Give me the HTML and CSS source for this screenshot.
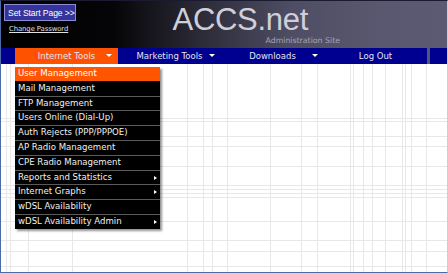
FILE: index.html
```html
<!DOCTYPE html>
<html>
<head>
<meta charset="utf-8">
<link rel="stylesheet" href="styles.css">
</head>
<body>
<div class="frame">
  <header class="header">
    <div class="tools">
      <button class="start-btn">Set Start Page &gt;&gt;</button>
      <a class="change-pw" href="#">Change Password</a>
    </div>
    <div class="brand">
      <div class="logo">ACCS.net</div>
      <div class="subtitle">Administration Site</div>
    </div>
  </header>
  <nav class="nav">
    <div class="nav-item active"><span>Internet Tools</span><i class="down"></i></div>
    <div class="nav-item"><span>Marketing Tools</span><i class="down"></i></div>
    <div class="nav-item"><span>Downloads</span><i class="down"></i></div>
    <div class="nav-item last"><span>Log Out</span></div>
  </nav>
  <main class="content">
    <ul class="menu">
      <li class="sel">User Management</li>
      <li>Mail Management</li>
      <li>FTP Management</li>
      <li>Users Online (Dial-Up)</li>
      <li>Auth Rejects (PPP/PPPOE)</li>
      <li>AP Radio Management</li>
      <li>CPE Radio Management</li>
      <li class="sub">Reports and Statistics</li>
      <li class="sub">Internet Graphs</li>
      <li>wDSL Availability</li>
      <li class="sub">wDSL Availability Admin</li>
    </ul>
  </main>
</div>
</body>
</html>
```
FILE: styles.css
```css
html, body { margin: 0; padding: 0; }
body { width: 448px; height: 273px; overflow: hidden; background: #fff; font-family: "DejaVu Sans", Verdana, sans-serif; }
.frame {
  width: 448px; height: 273px; box-sizing: border-box;
  border: 1px solid #4a6aa8; border-top-color: #1a1a30; border-right-color: #c8d0dc;
  display: flex; flex-direction: column; overflow: hidden;
}
.header {
  height: 47px; flex: none; display: flex; justify-content: space-between;
  background: linear-gradient(to right, #000 0, #050507 25%, #2c2b38 45%, #4f4d63 65%, #5a5870 85%, #5c5a72 100%);
}
.tools { padding: 3px 0 0 3px; display: flex; flex-direction: column; align-items: flex-start; }
.start-btn {
  font-family: "Liberation Sans", Arial, sans-serif; font-size: 8.6px; color: #fff; white-space: nowrap;
  background: #34349a; border: 1px solid #8c8cd6; padding: 0 0 0 3px; height: 17px; width: 72px;
  text-align: left; letter-spacing: -0.1px; margin: 0; box-sizing: border-box;
}
.change-pw { margin: 4px 0 0 5px; font-size: 6.9px; color: #e0e0e0; text-decoration: underline; letter-spacing: -0.1px; white-space: nowrap; }
.brand { display: flex; flex-direction: column; align-items: flex-end; margin-right: 107px; padding-top: 2px; }
.logo { font-family: "Liberation Sans", Arial, sans-serif; font-size: 31px; line-height: 34px; color: #cfcfd9; margin-right: 32px; letter-spacing: -0.3px; }
.subtitle { font-size: 7.8px; color: #a6a5b8; line-height: 9px; margin-top: -1px; }
.nav { height: 16px; flex: none; background: #000090; display: flex; padding-left: 14px; box-shadow: 0 1px 1px #9a9aa8; position: relative; }
.nav-item { width: 103px; height: 16px; position: relative; display: flex; align-items: center; justify-content: center; font-size: 8.5px; color: #e4e4f4; }
.nav-item.active { background: #ff5200; }
.nav-item.last { border-right: 3px solid #55557a; }
.nav-item .down { position: absolute; right: 6px; top: 6px; width: 0; height: 0; border-left: 3px solid transparent; border-right: 3px solid transparent; border-top: 3px solid #fff; }
.content {
  flex: 1; position: relative;
  background:
    linear-gradient(#e8e8e8,#e8e8e8) 0 54px / 100% 1px no-repeat,
    linear-gradient(#e8e8e8,#e8e8e8) 0 57px / 100% 1px no-repeat,
    linear-gradient(#e8e8e8,#e8e8e8) 0 72px / 100% 1px no-repeat,
    linear-gradient(#e8e8e8,#e8e8e8) 0 82px / 100% 1px no-repeat,
    linear-gradient(#e8e8e8,#e8e8e8) 0 102px / 100% 1px no-repeat,
    linear-gradient(#e8e8e8,#e8e8e8) 0 121px / 100% 1px no-repeat,
    linear-gradient(#e8e8e8,#e8e8e8) 0 125px / 100% 1px no-repeat,
    linear-gradient(#e8e8e8,#e8e8e8) 0 129px / 100% 1px no-repeat,
    linear-gradient(#e8e8e8,#e8e8e8) 0 133px / 100% 1px no-repeat,
    linear-gradient(#e8e8e8,#e8e8e8) 0 157px / 100% 1px no-repeat,
    linear-gradient(#e8e8e8,#e8e8e8) 0 176px / 100% 1px no-repeat,
    linear-gradient(#e8e8e8,#e8e8e8) 0 187px / 100% 1px no-repeat,
    linear-gradient(#e8e8e8,#e8e8e8) 0 202px / 100% 1px no-repeat,
    linear-gradient(#e8e8e8,#e8e8e8) 5px 0 / 1px 100% no-repeat,
    linear-gradient(#e8e8e8,#e8e8e8) 9px 0 / 1px 100% no-repeat,
    linear-gradient(#e8e8e8,#e8e8e8) 27px 0 / 1px 100% no-repeat,
    linear-gradient(#e8e8e8,#e8e8e8) 71px 0 / 1px 100% no-repeat,
    linear-gradient(#e8e8e8,#e8e8e8) 186px 0 / 1px 100% no-repeat,
    linear-gradient(#e8e8e8,#e8e8e8) 202px 0 / 1px 100% no-repeat,
    linear-gradient(#e8e8e8,#e8e8e8) 211px 0 / 1px 100% no-repeat,
    linear-gradient(#e8e8e8,#e8e8e8) 226px 0 / 1px 100% no-repeat,
    linear-gradient(#e8e8e8,#e8e8e8) 269px 0 / 1px 100% no-repeat,
    linear-gradient(#e8e8e8,#e8e8e8) 300px 0 / 1px 100% no-repeat,
    linear-gradient(#e8e8e8,#e8e8e8) 316px 0 / 1px 100% no-repeat,
    linear-gradient(#e8e8e8,#e8e8e8) 349px 0 / 1px 100% no-repeat,
    linear-gradient(#e8e8e8,#e8e8e8) 352px 0 / 1px 100% no-repeat,
    linear-gradient(#e8e8e8,#e8e8e8) 362px 0 / 1px 100% no-repeat,
    linear-gradient(#e8e8e8,#e8e8e8) 371px 0 / 1px 100% no-repeat,
    linear-gradient(#e8e8e8,#e8e8e8) 384px 0 / 1px 100% no-repeat,
    linear-gradient(#e8e8e8,#e8e8e8) 401px 0 / 1px 100% no-repeat,
    linear-gradient(#e8e8e8,#e8e8e8) 404px 0 / 1px 100% no-repeat,
    linear-gradient(#e8e8e8,#e8e8e8) 410px 0 / 1px 100% no-repeat,
    linear-gradient(#e8e8e8,#e8e8e8) 425px 0 / 1px 100% no-repeat,
    #fff;
}
.menu {
  position: absolute; left: 14px; top: 3px; margin: 0; padding: 0; list-style: none;
  width: 145px; background: #000; box-shadow: 2px 2px 2px rgba(60,60,60,0.55);
}
.menu li {
  height: 13.8px; line-height: 13.8px; border-bottom: 1px solid #5a5a5a; padding-left: 3px;
  font-size: 8.6px; color: #f0f0f0; position: relative; white-space: nowrap;
}
.menu li:last-child { border-bottom: none; height: 14.5px; }
.menu li.sel { background: #ff5500; color: #fff; border-bottom-color: #000; }
.menu li.sub::after {
  content: ""; position: absolute; right: 3px; top: 5px; width: 0; height: 0;
  border-top: 2.5px solid transparent; border-bottom: 2.5px solid transparent; border-left: 3px solid #fff;
}
```
